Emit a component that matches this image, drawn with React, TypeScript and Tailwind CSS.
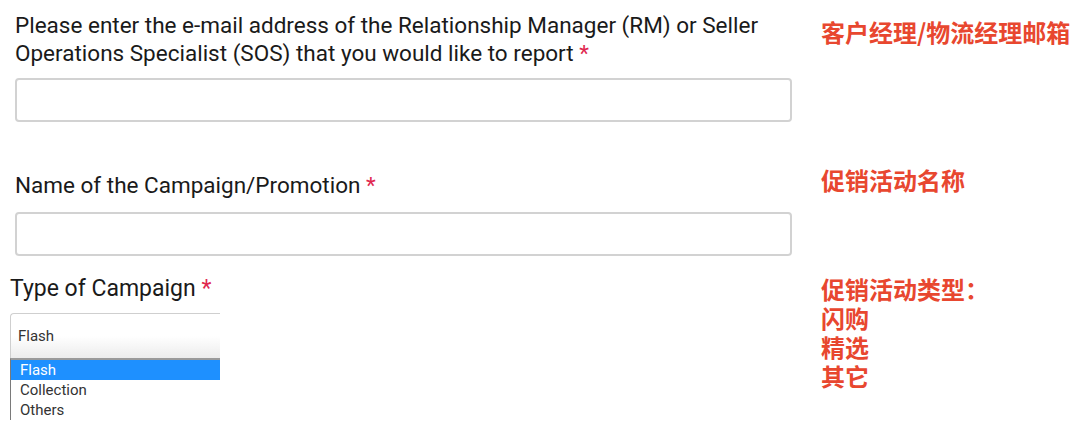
import React from "react";

const labelFont = { fontFamily: "Roboto, 'Liberation Sans', sans-serif" };

function Required() {
  return <span className="text-[#e0284f]"> *</span>;
}

function TextField() {
  return (
    <div className="h-[44px] w-[777px] rounded-[4px] border-2 border-[#d2d2d2] bg-white" />
  );
}

const options = ["Flash", "Collection", "Others"];

function CampaignSelect() {
  return (
    <div className="w-[210px] font-['Roboto','Liberation_Sans',sans-serif] text-[15px] text-[#333]">
      <div className="flex h-[45px] items-center rounded-tl-[4px] border-l border-t border-[#cfcfcf] bg-gradient-to-b from-white from-50% to-[#ececec] pl-[7px]">
        Flash
      </div>
      <div className="border-l border-t-2 border-l-[#7a7a7a] border-t-[#9a9a9a]">
        {options.map((o, i) => (
          <div
            key={o}
            className={
              i === 0
                ? "h-[20px] bg-[#1e90ff] pl-[9px] leading-[20px] text-white"
                : "h-[20px] pl-[9px] leading-[20px] text-[#333]"
            }
          >
            {o}
          </div>
        ))}
      </div>
    </div>
  );
}

export default function App() {
  return (
    <div className="flex h-[430px] w-[1078px] overflow-hidden bg-white">
      <div className="w-[806px] shrink-0 text-[#1a1a1a]" style={labelFont}>
        <div className="pl-[15px] pt-[11px]">
          <p className="text-[22.5px] leading-[28px]">
            Please enter the e-mail address of the Relationship Manager (RM) or Seller
            <br />
            Operations Specialist (SOS) that you would like to report
            <Required />
          </p>
          <div className="mt-[11px]">
            <TextField />
          </div>
        </div>
        <div className="pl-[15px] pt-[49px]">
          <p className="text-[22.5px] leading-[28px]">
            Name of the Campaign/Promotion
            <Required />
          </p>
          <div className="mt-[13px]">
            <TextField />
          </div>
        </div>
        <div className="pl-[10px] pt-[18px]">
          <p className="text-[23px] leading-[30px]">
            Type of Campaign
            <Required />
          </p>
          <div className="mt-[9px]">
            <CampaignSelect />
          </div>
        </div>
      </div>
      <div
        className="flex-1 pl-[15px] text-[24px] font-bold leading-[29px] text-[#e8472f]"
        style={{ fontFamily: "'Noto Sans CJK SC', 'Noto Sans', sans-serif" }}
      >
        <p className="pt-[17px]">客户经理/物流经理邮箱</p>
        <p className="mt-[119px]">促销活动名称</p>
        <div className="mt-[80px]">
          <p>促销活动类型：</p>
          <p>闪购</p>
          <p>精选</p>
          <p>其它</p>
        </div>
      </div>
    </div>
  );
}
